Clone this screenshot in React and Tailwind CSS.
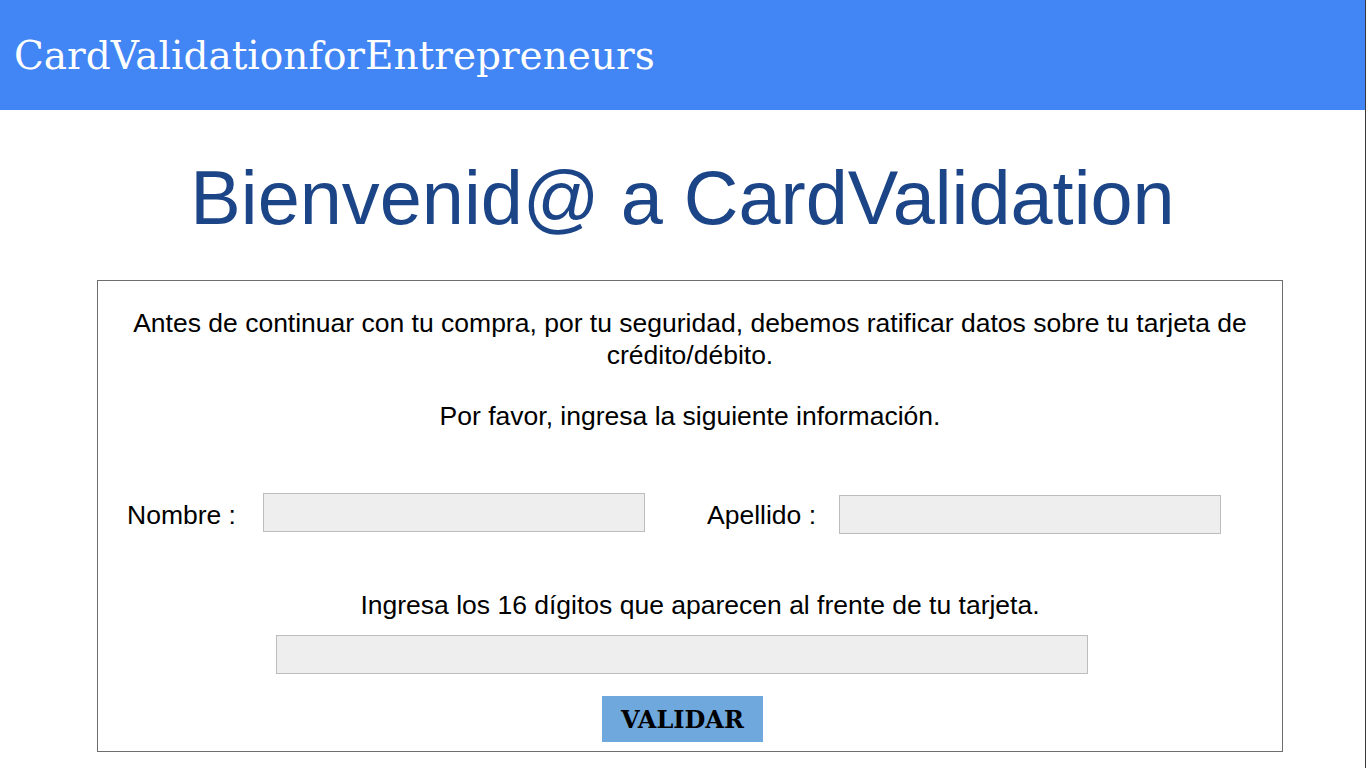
import React from 'react'

const sans = { fontFamily: '"Liberation Sans", Arial, sans-serif' }

const Field = ({ className = '' }) => (
  <input
    type="text"
    className={`h-[39px] w-[382px] border border-[#bdbdbd] bg-[#eeeeee] outline-none ${className}`}
  />
)

export default function App() {
  return (
    <div className="min-h-screen w-[1366px] border-r border-[#3a3a3a] bg-white">
      {/* Header */}
      <header className="flex h-[110px] items-center bg-[#4285f4] pl-[14px]">
        <span className="text-[39px] leading-none text-white [font-family:'DejaVu_Serif',serif]">
          CardValidationforEntrepreneurs
        </span>
      </header>

      {/* Title */}
      <h1
        className="mt-[50px] text-center text-[75.7px] leading-[75px] text-[#1c4587]"
        style={sans}
      >
        Bienvenid@ a CardValidation
      </h1>

      {/* Form box */}
      <div
        className="ml-[97px] mt-[45px] flex h-[472px] w-[1186px] flex-col border border-[#6e6e6e] pt-[26px] text-[26.5px] text-black"
        style={sans}
      >
        <p className="px-[20px] text-center leading-[32px]">
          Antes de continuar con tu compra, por tu seguridad, debemos ratificar datos sobre tu tarjeta de crédito/débito.
        </p>
        <p className="mt-[29px] text-center leading-[32px]">
          Por favor, ingresa la siguiente información.
        </p>

        <div className="mt-[59px] flex items-center pl-[29px]">
          <label className="w-[136px] pt-[4px] leading-[32px]">Nombre :</label>
          <Field />
          <label className="ml-[62px] w-[132px] pt-[4px] leading-[32px]">Apellido :</label>
          <Field className="mt-[4px]" />
        </div>

        <p className="mt-[55px] pl-[20px] text-center leading-[32px]">
          Ingresa los 16 dígitos que aparecen al frente de tu tarjeta.
        </p>
        <Field className="ml-[178px] mt-[14px] !w-[812px]" />

        <button
          type="button"
          className="ml-[504px] mt-[22px] h-[46px] w-[161px] bg-[#6fa8dc] pt-[2px] text-[24px] font-bold text-black [font-family:'DejaVu_Serif',serif]"
        >
          VALIDAR
        </button>
      </div>
    </div>
  )
}
